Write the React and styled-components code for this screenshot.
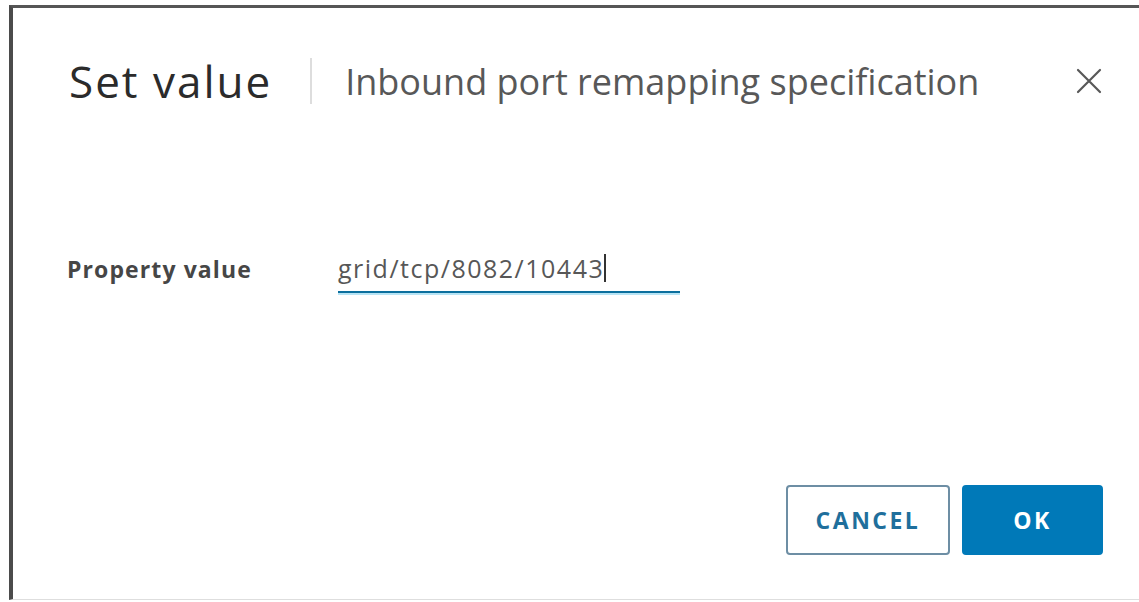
import styled, { createGlobalStyle } from "styled-components";

const GlobalStyle = createGlobalStyle`
  html, body {
    margin: 0;
    padding: 0;
    background: #ffffff;
    overflow: hidden;
  }
  body {
    font-family: "Open Sans", "Liberation Sans", sans-serif;
  }
`;

export default function App() {
  return (
    <>
      <GlobalStyle />
      <Page>
        <Dialog>
          <Header>
            <Title>Set value</Title>
            <Divider />
            <Subtitle>Inbound port remapping specification</Subtitle>
            <CloseButton aria-label="Close">
              <svg width="28" height="28" viewBox="0 0 28 28">
                <path
                  d="M3 3 L25 25 M25 3 L3 25"
                  stroke="#585858"
                  strokeWidth="2.2"
                  strokeLinecap="round"
                />
              </svg>
            </CloseButton>
          </Header>

          <Body>
            <FieldRow>
              <Label>Property value</Label>
              <InputWrap>
                <ValueText>grid/tcp/8082/10443</ValueText>
                <Caret />
              </InputWrap>
            </FieldRow>
          </Body>

          <Footer>
            <Button>CANCEL</Button>
            <Button primary>OK</Button>
          </Footer>
        </Dialog>
      </Page>
    </>
  );
}

const Page = styled.div`
  padding: 5px 0 0 9px;
  height: 602px;
  box-sizing: border-box;
`;

const Dialog = styled.section`
  width: 1160px;
  height: 595px;
  box-sizing: border-box;
  border-left: 4px solid #4b4b4b;
  border-top: 3px solid #565656;
  border-bottom: 1px solid #dedede;
  background: #ffffff;
  display: flex;
  flex-direction: column;
`;

const Header = styled.header`
  display: flex;
  align-items: center;
  height: 146px;
  padding: 0 0 0 56px;
  width: 1090px;
  box-sizing: border-box;
`;

const Title = styled.h1`
  margin: 0;
  font-size: 44px;
  font-weight: 400;
  color: #2b2b2b;
  letter-spacing: 2px;
`;

const Divider = styled.span`
  width: 2px;
  height: 46px;
  background: #dddddd;
  margin: 0 33px 0 38px;
`;

const Subtitle = styled.h2`
  margin: 0;
  font-size: 36px;
  font-weight: 400;
  color: #585858;
  flex: 1;
`;

const CloseButton = styled.button`
  border: none;
  background: none;
  padding: 0;
  width: 28px;
  height: 28px;
  display: flex;
`;

const Body = styled.div`
  flex: 1;
  padding: 97px 0 0 54px;
`;

const FieldRow = styled.div`
  display: flex;
  align-items: baseline;
`;

const Label = styled.label`
  width: 271px;
  font-size: 23px;
  font-weight: 700;
  color: #464646;
  letter-spacing: 1.1px;
`;

const InputWrap = styled.div`
  width: 342px;
  display: flex;
  align-items: baseline;
  padding-bottom: 6px;
  border-bottom: 2px solid #0b6f9e;
  box-shadow: 0 2px 0 #b7e4f5;
`;

const ValueText = styled.span`
  font-size: 25px;
  color: #575757;
  letter-spacing: 1.5px;
`;

const Caret = styled.span`
  align-self: center;
  width: 1.5px;
  height: 28px;
  background: #333;
`;

const Footer = styled.footer`
  display: flex;
  gap: 12px;
  padding: 0 0 44px 773px;
`;

const Button = styled.button`
  height: 70px;
  width: ${(p) => (p.primary ? "141px" : "164px")};
  border-radius: 4px;
  border: 2px solid ${(p) => (p.primary ? "#0079b8" : "#6d8ea4")};
  background: ${(p) => (p.primary ? "#0079b8" : "#ffffff")};
  color: ${(p) => (p.primary ? "#ffffff" : "#1f6f9c")};
  font-family: "Open Sans", "Liberation Sans", sans-serif;
  font-size: 23px;
  font-weight: 700;
  letter-spacing: 2.5px;
`;
